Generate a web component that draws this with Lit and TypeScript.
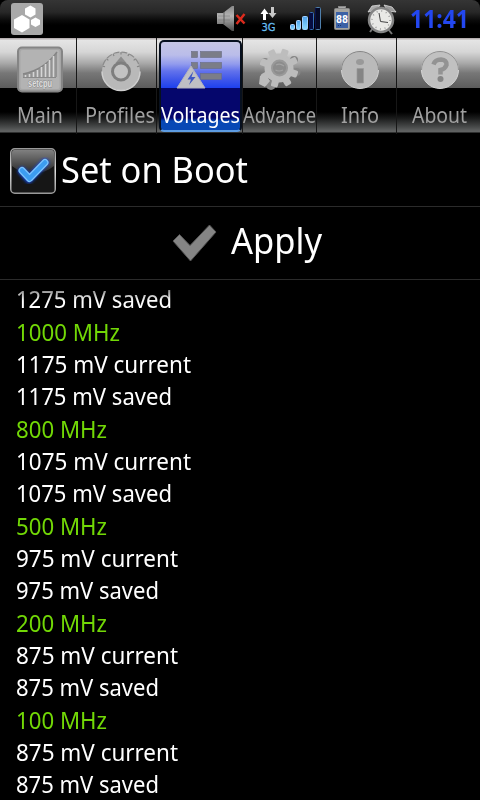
import { LitElement, html, css, svg } from "lit";
import { customElement, property } from "lit/decorators.js";
import { styleMap } from "lit/directives/style-map.js";

const notch = Array.from({ length: 7 }, (_, i) => 195 + i * 25);

const icons: Record<string, unknown> = {
  main: svg`
    <rect x="3" y="2.500" width="44" height="44" rx="4" fill="#a6a6a6" stroke="#858585" stroke-width="2"/>
    <rect x="5.500" y="5" width="39" height="39" rx="2" fill="#b3b3b3"/>
    <path d="M8 29Q31 26 42 7V32H8Z" fill="#939393"/>
    <path d="M8 29Q29 25 42 7" fill="none" stroke="#858585" stroke-width="1.500"/>
    <path d="M10.500 30V32M14.500 29V32M18.500 27V32M22.500 25V32M26.500 22V32M30.500 19V32M34.500 15V32M38.500 11V32" stroke="#d6d6d6" stroke-width="1.600"/>
    <path d="M8 32.500H41" stroke="#898989"/>
    <text x="13" y="41.500" class="logo" textLength="24" lengthAdjust="spacingAndGlyphs">setcpu</text>`,
  profiles: svg`
    <circle cx="25" cy="26.500" r="19" fill="#b9b9b9"/>
    <path d="M6 26.500A19 19 0 0 0 44 26.500" fill="none" stroke="#cfcfcf" stroke-width="1.500"/>
    <path d="M7 20A19 19 0 0 1 43 20" fill="none" stroke="#8b8b8b" stroke-width="1.200" stroke-dasharray="6 2"/>
    ${notch.map((a) => svg`<path d="M25 26m16.500 0h2.500" stroke="#858585" stroke-width="1.200" transform="rotate(${a} 25 26)"/>`)}
    <path d="M19.500 18L25 11.500L30.500 18" fill="#8c8c8c"/>
    <circle cx="25" cy="26.500" r="8.500" fill="#c2c2c2" stroke="#7e7e7e" stroke-width="3"/>`,
  voltages: svg`
    <g fill="#7b7d88" stroke="#696d82" stroke-width=".6">
      <rect x="16.500" y="6.500" width="6" height="6"/><rect x="25.500" y="6.500" width="21" height="6"/>
      <rect x="16.500" y="17.500" width="6" height="6"/><rect x="25.500" y="17.500" width="21" height="6"/>
      <rect x="25.500" y="28.500" width="21" height="6"/></g>
    <path d="M16 21L30 43H2Z" fill="#c0c0c4" stroke="#b2b2be"/>
    <path d="M18.500 26L12.500 34.500H16L14 40L20.500 32H16.500Z" fill="#4057c2"/>`,
  advanced: svg`
    <g fill="#858585"><circle cx="41" cy="15" r="4"/><circle cx="43.500" cy="27" r="4"/><circle cx="18" cy="40" r="5"/><circle cx="12" cy="17" r="4"/></g>
    <g fill="#bdbdbd"><circle cx="26" cy="23" r="14.500"/>
    ${[20, 65, 110, 150, 195, 240, 290, 335].map((a) => svg`<rect x="22.500" y="3.500" width="7" height="9" rx="1.500" transform="rotate(${a} 26 23)"/>`)}
    <path d="M7 31L12 28L17 36L12 42L6 39Z"/></g>
    <circle cx="26.500" cy="23" r="7.500" fill="#8c8c8c" stroke="#999" stroke-width="2"/>
    <path d="M23 20Q27 18 31 21M22.500 25Q26 27 30 25" fill="none" stroke="#a3a3a3" stroke-width="1.200"/>`,
  info: svg`
    <circle cx="25" cy="25" r="18.500" fill="#bababa" stroke="#cfcfcf"/>
    <path d="M6.500 25A18.500 18.500 0 0 1 43.500 25" fill="none" stroke="#858585"/>
    <ellipse cx="25" cy="17" rx="4" ry="3" fill="#999"/>
    <path d="M22 23.500H28.500V38H22Z" fill="#858585" stroke="#999" stroke-width=".7"/>`,
  about: svg`
    <circle cx="25" cy="25" r="18.500" fill="#c1c1c1" stroke="#d4d4d4"/>
    <path d="M6.500 25A18.500 18.500 0 0 1 43.500 25" fill="none" stroke="#909090"/>
    <path d="M18.500 19.500Q20 14.500 26 14.500Q32 15 31.500 20Q30 24 25.500 25V29.500" fill="none" stroke="#939393" stroke-width="4.500"/>
    <circle cx="25.500" cy="34" r="3" fill="#858585"/>`,
};

const tabs = [
  { label: "Main", icon: "main", width: 76, text: 46, iconShift: 2, textShift: 2 },
  { label: "Profiles", icon: "profiles", width: 79, text: 70, iconShift: 4, textShift: 3 },
  { label: "Voltages", icon: "voltages", width: 85, text: 79, iconShift: 0, textShift: 0, selected: true },
  { label: "Advance", icon: "advanced", width: 73, text: 73, iconShift: -2, textShift: 0 },
  { label: "Info", icon: "info", width: 79, text: 38, iconShift: 3.5, textShift: 3 },
  { label: "About", icon: "about", width: 83, text: 55, iconShift: 1.5, textShift: 1 },
];

const rows: [string, number][] = [
  ["1275 mV saved", 156],
  ["1000 MHz", 104],
  ["1175 mV current", 175],
  ["1175 mV saved", 156],
  ["800 MHz", 91],
  ["1075 mV current", 175],
  ["1075 mV saved", 156],
  ["500 MHz", 91],
  ["975 mV current", 162],
  ["975 mV saved", 143],
  ["200 MHz", 91],
  ["875 mV current", 162],
  ["875 mV saved", 143],
  ["100 MHz", 91],
  ["875 mV current", 162],
  ["875 mV saved", 143],
];

/** A line of text condensed to a given advance width. */
@customElement("fit-text")
class FitText extends LitElement {
  static styles = css`
    :host { display: block; overflow: visible; white-space: nowrap; }
    span { display: inline-block; transform-origin: 0 50%; }
  `;
  @property({ type: Number }) width = 0;
  @property() text = "";
  render() {
    return html`<span>${this.text}</span>`;
  }
  updated() {
    const span = this.renderRoot.querySelector("span") as HTMLElement;
    span.style.transform = "none";
    const natural = span.getBoundingClientRect().width;
    this.style.width = `${this.width}px`;
    span.style.transform = `scaleX(${this.width / natural})`;
  }
}

@customElement("app-root")
class AppRoot extends LitElement {
  static styles = css`
    :host {
      display: flex; flex-direction: column; width: 480px; height: 800px; overflow: hidden;
      background: #000; color: #fff; font-family: "Noto Sans", "Open Sans", sans-serif;
    }
    * { box-sizing: border-box; }
    svg { display: block; flex: none; }
    .status {
      height: 38px; flex: none; display: flex; align-items: flex-start; border-radius: 8px 8px 0 0;
      background: linear-gradient(#353535 0, #282828 12px, #0b0b0b 20px, #000 25px);
    }
    .clock { margin: 1px 0 0 0; font: bold 24.5px/36px "Noto Sans", sans-serif; color: #2347f0; }
    .g3 { font: 10px "DejaVu Sans", sans-serif; fill: #65bdf2; stroke: #65bdf2; stroke-width: .3px; }
    .pct { font: bold 10px "DejaVu Sans", sans-serif; fill: #fff; }
    .logo { font: bold 10px "Liberation Sans", sans-serif; fill: #dedede; stroke: #888; stroke-width: 1px; paint-order: stroke; }
    .tabs { height: 96px; flex: none; display: flex; background: #000; }
    .tab {
      flex: none; height: 96px; display: flex; flex-direction: column; align-items: center;
      box-sizing: content-box; border-right: 1px solid #171717; overflow: hidden; color: #a0a0a0;
      background: linear-gradient(#b5aeb0 0, #b5aeb0 1px, #e5e5e5 2px, #d6d6d6 14px, #aaa 25px, #777 35px,
        #5c5c5c 50px, #000 50px, #000 74px, #191a1a 80px, #484a4a 89px, #606262 93px, #606262 94px, #000 95px);
    }
    .tab:last-child { border-right: 0; }
    .face {
      height: 96px; width: 100%; display: flex; flex-direction: column; align-items: center; padding-top: 7px;
    }
    .selected { color: #fff; }
    .selected .face {
      width: 83px; height: 92px; margin: 2px 0 0 1px; padding-top: 3px; border: 2px solid #07101e;
      border-radius: 5px; border-bottom-color: #5d9ce2;
      background: linear-gradient(#c5c6e4 0, #babdea 13px, #929bed 22px, #6272ec 29px, #3d55ea 38px,
        #1d40ee 46px, #05066c 46px, #05066c 76px, #0748b5 79px, #0748b5 100%);
    }
    .label { font-size: 22px; line-height: 30px; height: 30px; margin-top: 4px; }
    .boot {
      height: 73px; flex: none; display: flex; padding: 14px 0 0 10px; border-bottom: 1px solid #2b2b2b;
    }
    .large { font-size: 36px; line-height: 48px; }
    .boot .large { margin: -2px 0 0 5px; }
    .apply {
      height: 73px; flex: none; display: flex; padding: 17px 0 0 168px; border-bottom: 1px solid #2b2b2b;
    }
    .apply .large { margin: -7px 0 0 13px; }
    .list { flex: 1; min-height: 0; overflow: hidden; padding: 2px 0 0 16px; font-size: 24px; }
    .row { height: 32px; line-height: 33px; }
    .row.saved { height: 33px; }
    .row.freq { color: #72d806; }
    .row:first-child fit-text {
      -webkit-mask-image: linear-gradient(rgb(0 0 0 / .5) 7px, #000 19px);
      mask-image: linear-gradient(rgb(0 0 0 / .5) 7px, #000 19px);
    }
  `;

  private statusBar() {
    return html`<div class="status">
      <svg width="410" height="38" viewBox="0 0 410 38">
        <defs>
          <linearGradient id="metal" x1="0" y1="0" x2="0" y2="1"><stop offset="0" stop-color="#888"/><stop offset=".4" stop-color="#b4b4b4"/><stop offset="1" stop-color="#4c4c4c"/></linearGradient>
          <linearGradient id="bar" x1="0" y1="0" x2="0" y2="1"><stop offset="0" stop-color="#4d9fea"/><stop offset="1" stop-color="#8ddcff"/></linearGradient>
        </defs>
        <rect x="11" y="3" width="32" height="32" rx="3" fill="#a9a9a9"/>
        <g fill="#fff">
          <path d="M22 15L29.500 19.500V28L22 32.500L14 28V19.500Z"/>
          <path d="M30.500 5.500L35.500 8.500V14.500L30.500 17.500L25 14.500V8.500Z"/>
          <path d="M35.500 17.500L40 20V24.500L35.500 27L31 24.500V20Z"/>
        </g>
        <path d="M217 13H223L232 6H234V31H232L223 24H217Z" fill="url(#metal)"/>
        <path d="M218 16H230M218 20H230" stroke="#777" stroke-opacity=".6"/>
        <path d="M224 12V24" stroke="#5c5c5c"/>
        <path d="M236.500 15L244.500 23.500M244.500 14L236.500 24" stroke="#db2b1d" stroke-width="2.500"/>
        <path d="M264.500 8.500L268.500 14H266V20H263V14H260.500Z" fill="#fff"/>
        <path d="M272.500 18L276.500 13H274V7H271V13H268.500Z" fill="#c8c8c8"/>
        <text x="261.500" y="31" class="g3" textLength="14" lengthAdjust="spacingAndGlyphs">3G</text>
        <g stroke-width="1">
          <rect x="290.500" y="24.500" width="4" height="5" rx="1" fill="url(#bar)" stroke="#b7d7ff"/>
          <rect x="296.500" y="20.500" width="4" height="9" rx="1" fill="url(#bar)" stroke="#b0d5ff"/>
          <rect x="302.500" y="16.500" width="5" height="13" rx="1" fill="url(#bar)" stroke="#9fceff"/>
          <rect x="309.500" y="12.500" width="4" height="17" rx="1" fill="#070d40" stroke="#376fb7"/>
          <rect x="315.500" y="7.500" width="5" height="22" rx="1" fill="#060a25" stroke="#4f7fab"/>
          <path d="M309.500 12.500V29.500M315.500 8V29" stroke="#07104e"/>
        </g>
        <rect x="338.500" y="6.500" width="7" height="4" fill="#aaa" stroke="#888"/>
        <rect x="334.500" y="8.500" width="15" height="21" rx="1" fill="#a5a5a2" stroke="#858585"/>
        <rect x="336" y="12" width="12" height="16" fill="#3c61a6"/>
        <text x="336" y="23" class="pct" textLength="12" lengthAdjust="spacingAndGlyphs">88</text>
        <path d="M338 25.500H342" stroke="#15306c" stroke-dasharray="1 1"/>
        <g>
          <path d="M368 12L372 6L380 5L377 10Z" fill="#aaa" stroke="#ddd" stroke-width=".8"/>
          <path d="M384 5L392 7L396 12L388 11Z" fill="#999" stroke="#ddd" stroke-width=".8"/>
          <path d="M373 28L370 32M388 29L392 34" stroke="#777" stroke-width="2"/>
          <circle cx="381" cy="20" r="12" fill="#e9e9e6" stroke="#858585" stroke-width="2.500"/>
          <circle cx="381" cy="20" r="9" fill="none" stroke="#999" stroke-width="1.500" stroke-dasharray="1 3.710"/>
          <path d="M379 13L380.500 21.500L388 22.500" fill="none" stroke="#444" stroke-width="1"/>
        </g>
      </svg>
      <fit-text class="clock" .text=${"11:41"} .width=${59}></fit-text>
    </div>`;
  }

  render() {
    return html`
      ${this.statusBar()}
      <div class="tabs">
        ${tabs.map((t) => html`<div class="tab ${t.selected ? "selected" : ""}" style=${styleMap({ width: `${t.width}px` })}>
          <div class="face">
            <svg width="50" height="50" viewBox="0 0 50 50" style=${styleMap({ marginLeft: `${t.iconShift * 2}px` })}>${icons[t.icon]}</svg>
            <fit-text class="label" style=${styleMap({ marginLeft: `${t.textShift * 2}px` })} .text=${t.label} .width=${t.text}></fit-text>
          </div>
        </div>`)}
      </div>
      <div class="boot">
        <svg width="46" height="46" viewBox="0 0 46 46">
          <defs>
            <linearGradient id="edge" x1="0" y1="0" x2="0" y2="1"><stop offset="0" stop-color="#999"/><stop offset=".5" stop-color="#ddd"/><stop offset="1" stop-color="#999"/></linearGradient>
            <linearGradient id="gloss" x1="0" y1="0" x2="0" y2="1"><stop offset="0" stop-color="#808080"/><stop offset="1" stop-color="#292929"/></linearGradient>
            <filter id="glow" x="-30%" y="-30%" width="160%" height="160%"><feGaussianBlur stdDeviation="1.500"/></filter>
          </defs>
          <rect x=".75" y=".75" width="44.500" height="44.500" rx="4" fill="#161616" stroke="url(#edge)" stroke-width="1.500"/>
          <path d="M2 4Q2 2 4 2H42Q44 2 44 4V18Q34 26 23 25Q10 25 2 18Z" fill="url(#gloss)"/>
          <path d="M12 23L19 31L35 14.500" fill="none" stroke="#1747d8" stroke-width="8" stroke-linecap="round" stroke-linejoin="round" filter="url(#glow)"/>
          <path d="M12 22.500L19.500 30.500L35 14.500" fill="none" stroke="#7cc4fc" stroke-width="7" stroke-linecap="round" stroke-linejoin="round"/>
          <path d="M12 22.500L19.500 30.500L35 14.500" fill="none" stroke="#3c9cf1" stroke-width="4.500" stroke-linecap="round" stroke-linejoin="round"/>
        </svg>
        <fit-text class="large" .text=${"Set on Boot"} .width=${187}></fit-text>
      </div>
      <div class="apply">
        <svg width="50" height="46" viewBox="0 0 50 46">
          <path d="M5 17L11.500 10.500L22 21.500L41.500 1L48 8L22.500 37Z" fill="#858585" stroke="#555" stroke-width="1" stroke-linejoin="round"/>
        </svg>
        <fit-text class="large" .text=${"Apply"} .width=${91}></fit-text>
      </div>
      <div class="list">
        ${rows.map(([text, width]) => html`<div class="row ${text.endsWith("MHz") ? "freq" : text.endsWith("saved") ? "saved" : ""}">
          <fit-text .text=${text} .width=${width}></fit-text>
        </div>`)}
      </div>`;
  }
}
